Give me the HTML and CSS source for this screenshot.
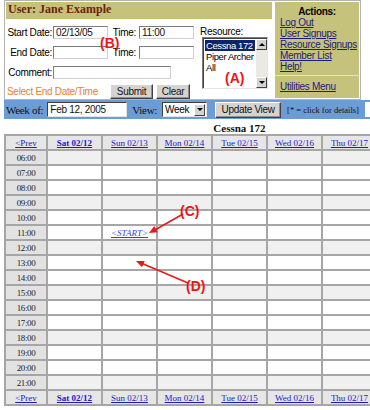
FILE: index.html
```html
<!DOCTYPE html>
<html lang="en">
  <head>
    <meta charset="UTF-8" />
    <meta name="viewport" content="width=device-width, initial-scale=1.0" />
    <title>Resource Schedule</title>
    <link rel="stylesheet" href="styles.css">
  </head>
  <body>
    <div class="top">
      <div class="main">
        <div class="user-bar">User: Jane Example</div>
        <div class="entry">
          <div class="fields">
            <div class="row">
              <label class="lbl">Start Date:</label>
              <input class="field short" value="02/13/05">
              <label class="lbl-time">Time:</label>
              <input class="field short" value="11:00">
            </div>
            <div class="row">
              <label class="lbl">End Date:</label>
              <input class="field short" value="">
              <label class="lbl-time">Time:</label>
              <input class="field short" value="">
            </div>
            <div class="row">
              <label class="lbl">Comment:</label>
              <input class="field wide" value="">
            </div>
            <div class="row buttons">
              <span class="hint">Select End Date/Time</span>
              <button class="btn submit">Submit</button>
              <button class="btn clear">Clear</button>
            </div>
          </div>
          <div class="resource">
            <div class="res-label">Resource:</div>
            <div class="listbox">
              <div class="options">
                <div class="opt selected">Cessna 172</div>
                <div class="opt">Piper Archer</div>
                <div class="opt">All</div>
              </div>
              <div class="scrollbar">
                <span class="sb-btn"><i class="tri up"></i></span>
                <span class="sb-track"></span>
                <span class="sb-btn"><i class="tri down"></i></span>
              </div>
            </div>
          </div>
        </div>
      </div>
      <div class="actions">
        <div class="actions-title">Actions:</div>
        <a href="#">Log Out</a>
        <a href="#">User Signups</a>
        <a href="#">Resource Signups</a>
        <a href="#">Member List</a>
        <a href="#">Help!</a>
        <div class="actions-sep"></div>
        <a href="#">Utilities Menu</a>
      </div>
    </div>

    <div class="toolbar">
      <span class="tb-label">Week of:</span>
      <input class="week-in" value="Feb 12, 2005">
      <span class="tb-label view">View:</span>
      <div class="select"><span>Week</span><span class="sb-btn"><i class="tri down"></i></span></div>
      <button class="btn update">Update View</button>
      <span class="details">[* = click for details]</span>
      <span class="tb-box"></span>
    </div>

    <table class="cal">
      <caption>Cessna 172</caption>
      <colgroup>
        <col class="c-time"><col class="c-day"><col class="c-day"><col class="c-day"><col class="c-day"><col class="c-day"><col class="c-day"><col class="c-day"><col class="c-time">
      </colgroup>
      <tr class="head">
        <td><a href="#">&lt;Prev</a></td><td><a href="#" class="today">Sat 02/12</a></td><td><a href="#">Sun 02/13</a></td><td><a href="#">Mon 02/14</a></td><td><a href="#">Tue 02/15</a></td><td><a href="#">Wed 02/16</a></td><td><a href="#">Thu 02/17</a></td><td><a href="#">Fri 02/18</a></td><td><a href="#">Next&gt;</a></td>
      </tr>
      <tr class="alt"><td class="time">06:00</td><td></td><td></td><td></td><td></td><td></td><td></td><td></td><td class="time">06:00</td></tr>
      <tr><td class="time">07:00</td><td></td><td></td><td></td><td></td><td></td><td></td><td></td><td class="time">07:00</td></tr>
      <tr><td class="time">08:00</td><td></td><td></td><td></td><td></td><td></td><td></td><td></td><td class="time">08:00</td></tr>
      <tr class="alt"><td class="time">09:00</td><td></td><td></td><td></td><td></td><td></td><td></td><td></td><td class="time">09:00</td></tr>
      <tr><td class="time">10:00</td><td></td><td></td><td></td><td></td><td></td><td></td><td></td><td class="time">10:00</td></tr>
      <tr><td class="time">11:00</td><td></td><td><a href="#" class="start">&lt;START&gt;</a></td><td></td><td></td><td></td><td></td><td></td><td class="time">11:00</td></tr>
      <tr class="alt"><td class="time">12:00</td><td></td><td></td><td></td><td></td><td></td><td></td><td></td><td class="time">12:00</td></tr>
      <tr><td class="time">13:00</td><td></td><td></td><td></td><td></td><td></td><td></td><td></td><td class="time">13:00</td></tr>
      <tr><td class="time">14:00</td><td></td><td></td><td></td><td></td><td></td><td></td><td></td><td class="time">14:00</td></tr>
      <tr class="alt"><td class="time">15:00</td><td></td><td></td><td></td><td></td><td></td><td></td><td></td><td class="time">15:00</td></tr>
      <tr><td class="time">16:00</td><td></td><td></td><td></td><td></td><td></td><td></td><td></td><td class="time">16:00</td></tr>
      <tr><td class="time">17:00</td><td></td><td></td><td></td><td></td><td></td><td></td><td></td><td class="time">17:00</td></tr>
      <tr class="alt"><td class="time">18:00</td><td></td><td></td><td></td><td></td><td></td><td></td><td></td><td class="time">18:00</td></tr>
      <tr><td class="time">19:00</td><td></td><td></td><td></td><td></td><td></td><td></td><td></td><td class="time">19:00</td></tr>
      <tr><td class="time">20:00</td><td></td><td></td><td></td><td></td><td></td><td></td><td></td><td class="time">20:00</td></tr>
      <tr class="alt"><td class="time">21:00</td><td></td><td></td><td></td><td></td><td></td><td></td><td></td><td class="time">21:00</td></tr>
      <tr class="head">
        <td><a href="#">&lt;Prev</a></td><td><a href="#" class="today">Sat 02/12</a></td><td><a href="#">Sun 02/13</a></td><td><a href="#">Mon 02/14</a></td><td><a href="#">Tue 02/15</a></td><td><a href="#">Wed 02/16</a></td><td><a href="#">Thu 02/17</a></td><td><a href="#">Fri 02/18</a></td><td><a href="#">Next&gt;</a></td>
      </tr>
    </table>

    <!-- callout labels drawn over the screenshot -->
    <span class="callout" style="left:225px;top:71px">(A)</span>
    <span class="callout" style="left:100px;top:36px">(B)</span>
    <span class="callout" style="left:180px;top:204px">(C)</span>
    <span class="callout" style="left:186px;top:279px">(D)</span>
    <svg class="arrows" width="370" height="410" viewBox="0 0 370 410">
      <line x1="183" y1="214" x2="154" y2="230.5" />
      <polygon points="149,233 157.7,232.2 154.3,226.1" />
      <line x1="188" y1="283" x2="141" y2="263" />
      <polygon points="136,261 144.7,260.9 142,267.3" />
    </svg>
  </body>
</html>
```

FILE: styles.css
```css
html {
  overflow: hidden;
}
body {
  margin: 0;
  padding: 0 0 0 4px;
  position: relative;
  width: 480px;
  font-family: "Liberation Sans", Arial, sans-serif;
  font-size: 10px;
  letter-spacing: -0.3px;
  color: #000;
  background-color: #fff;
}

/* top panel */
.top {
  display: flex;
  gap: 3px;
  box-sizing: border-box;
  width: 357px;
  height: 100px;
  padding: 1px;
  border: 1px solid #b4b4b4;
}
.main {
  width: 266px;
}
.user-bar {
  height: 17px;
  line-height: 17px;
  padding-left: 2px;
  background-color: #c5c27b;
  color: #701c10;
  font: bold 12px "Liberation Serif", "Times New Roman", serif;
  letter-spacing: 0;
}
.entry {
  display: flex;
}
.fields {
  width: 192px;
  padding-top: 7px;
}
.row {
  display: flex;
  align-items: center;
  height: 13px;
  margin-bottom: 7px;
}
.row.buttons {
  height: 15px;
  margin-top: -2px;
}
.lbl {
  flex: none;
  width: 46px;
  text-align: right;
}
.lbl-time {
  flex: none;
  width: 28px;
  margin-right: 2px;
  text-align: right;
}
.field {
  box-sizing: border-box;
  height: 13px;
  margin: 0 0 0 1px;
  padding: 0 2px;
  border: 1px solid;
  border-color: #7b7b7b #d0d0d0 #d0d0d0 #7b7b7b;
  font: 10px "Liberation Sans", Arial, sans-serif;
  letter-spacing: -0.3px;
  color: #111;
  background-color: #fff;
}
.field.short {
  width: 55px;
}
.field.wide {
  width: 118px;
}
.hint {
  flex: none;
  width: 103px;
  padding-left: 1px;
  color: #e8822e;
}
.btn {
  box-sizing: border-box;
  height: 15px;
  padding: 0;
  border: 1px solid;
  border-color: #fff #404040 #404040 #fff;
  box-shadow: inset -1px -1px #909090;
  background-color: #d6d3ce;
  font: 10px "Liberation Sans", Arial, sans-serif;
  letter-spacing: -0.3px;
  color: #111;
}
.btn.submit {
  width: 43px;
}
.btn.clear {
  width: 34px;
  margin-left: 3px;
}

/* resource list */
.resource {
  width: 72px;
  padding-top: 7px;
}
.res-label {
  line-height: 11px;
  padding-left: 2px;
}
.listbox {
  display: flex;
  box-sizing: border-box;
  width: 66px;
  height: 52px;
  margin-left: 4px;
  border: 1px solid;
  border-color: #7b7b7b #e4e4e4 #e4e4e4 #7b7b7b;
  box-shadow: inset 1px 1px #404040;
  background-color: #fff;
}
.options {
  flex: 1;
  min-width: 0;
  padding: 2px 1px 0 2px;
  font-size: 9.5px;
  letter-spacing: -0.4px;
}
.opt {
  line-height: 11px;
  padding-left: 1px;
  white-space: nowrap;
  overflow: hidden;
}
.opt.selected {
  background-color: #0a246a;
  color: #fff;
}
.scrollbar {
  display: flex;
  flex-direction: column;
  width: 11px;
  padding: 1px 0 0;
}
.sb-btn {
  display: flex;
  align-items: center;
  justify-content: center;
  box-sizing: border-box;
  width: 11px;
  height: 11px;
  border: 1px solid;
  border-color: #fff #404040 #404040 #fff;
  background-color: #d6d3ce;
}
.sb-track {
  flex: 1;
  background-color: #ebe9e4;
}
.tri {
  width: 0;
  height: 0;
  border-left: 3px solid transparent;
  border-right: 3px solid transparent;
}
.tri.up {
  border-bottom: 3px solid #000;
}
.tri.down {
  border-top: 3px solid #000;
}

/* actions panel */
.actions {
  box-sizing: border-box;
  width: 84px;
  height: 96px;
  padding: 4px 0 0 5px;
  background-color: #c5c27b;
}
.actions-title {
  line-height: 11px;
  padding-right: 5px;
  text-align: center;
  font-weight: bold;
}
.actions a {
  display: block;
  line-height: 11px;
  color: #1c1c78;
}
.actions-sep {
  height: 1px;
  margin: 3px 0 5px -5px;
  background-color: #e6e4c4;
}

/* week toolbar */
.toolbar {
  display: flex;
  align-items: center;
  width: 480px;
  height: 19px;
  background-color: #6c9cd6;
}
.tb-label {
  padding-left: 2px;
  font: 11px "Liberation Serif", "Times New Roman", serif;
  letter-spacing: -0.3px;
  color: #111;
}
.tb-label.view {
  margin-left: 3px;
}
.week-in {
  box-sizing: border-box;
  width: 80px;
  height: 15px;
  margin: 0 0 0 4px;
  padding: 0 2px;
  border: 1px solid;
  border-color: #404040 #e4e4e4 #e4e4e4 #404040;
  font: 10px "Liberation Sans", Arial, sans-serif;
  letter-spacing: -0.3px;
  color: #111;
  background-color: #fff;
}
.select {
  display: flex;
  align-items: center;
  justify-content: space-between;
  box-sizing: border-box;
  width: 45px;
  height: 15px;
  margin-left: 5px;
  padding: 0 1px 0 2px;
  border: 1px solid;
  border-color: #404040 #e4e4e4 #e4e4e4 #404040;
  background-color: #fff;
}
.select .sb-btn {
  height: 12px;
}
.btn.update {
  width: 66px;
  height: 16px;
  margin-left: 8px;
}
.details {
  margin-left: 6px;
  font: 8.5px "Liberation Serif", "Times New Roman", serif;
  letter-spacing: 0;
  color: #111;
}
.tb-box {
  width: 40px;
  height: 15px;
  margin-left: 6px;
  background-color: #fff;
}

/* calendar grid */
.cal {
  border-collapse: collapse;
  table-layout: fixed;
  width: 469px;
}
.cal caption {
  height: 13px;
  padding-top: 2px;
  font: bold 11px/14px "Liberation Serif", "Times New Roman", serif;
  letter-spacing: 0;
  color: #111;
}
.c-time {
  width: 42px;
}
.c-day {
  width: 55px;
}
.cal td {
  height: 13px;
  padding: 0;
  border: 2px solid #a6a6a6;
  text-align: center;
  font: 9px "Liberation Serif", "Times New Roman", serif;
  letter-spacing: -0.4px;
  color: #222;
}
.cal tr.alt td {
  background-color: #f0f0f0;
}
.cal td.time,
.cal tr.alt td.time {
  background-color: #e2e2e2;
}
.cal tr.head td {
  background-color: #e6e6e6;
}
.cal a {
  color: #1a1acc;
  letter-spacing: 0;
}
.cal a.today {
  font-weight: bold;
}
.cal a.start {
  font-style: italic;
  color: #3344dd;
}

/* callouts */
.callout {
  position: absolute;
  font: bold 14px/14px "Liberation Sans", Arial, sans-serif;
  letter-spacing: 0;
  color: #f01414;
}
.arrows {
  position: absolute;
  left: 0;
  top: 0;
}
.arrows line {
  stroke: #e81818;
  stroke-width: 1.5;
}
.arrows polygon {
  fill: #e81818;
}
```
